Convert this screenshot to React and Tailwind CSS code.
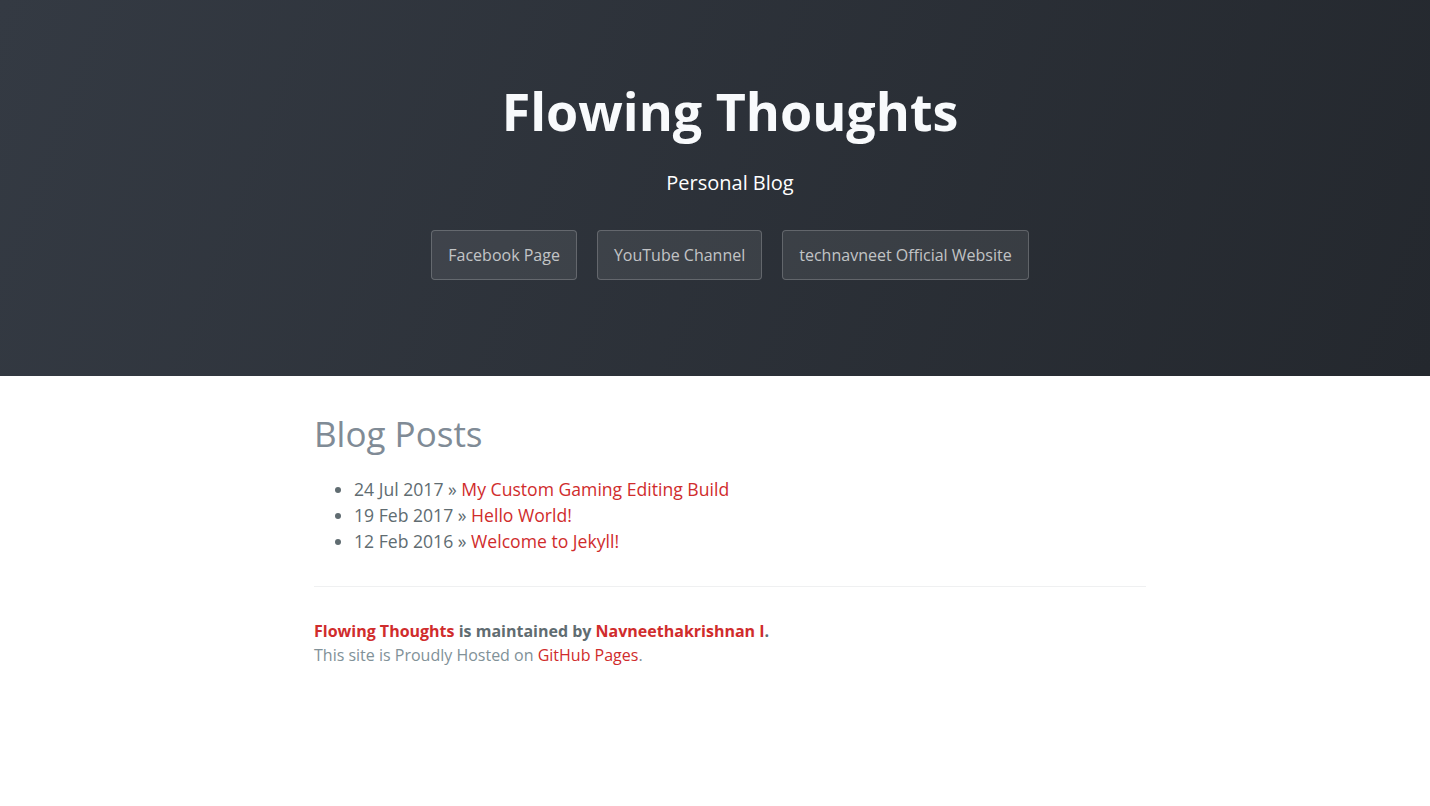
const posts = [
  { date: '24 Jul 2017', title: 'My Custom Gaming Editing Build' },
  { date: '19 Feb 2017', title: 'Hello World!' },
  { date: '12 Feb 2016', title: 'Welcome to Jekyll!' },
];

const buttons = ['Facebook Page', 'YouTube Channel', 'technavneet Official Website'];

export default function App() {
  return (
    <div className="min-h-[806px] bg-white font-['Open_Sans',sans-serif] text-[#606c71]">
      <header className="bg-[linear-gradient(110deg,#343a43,#24282e)] pb-[96px] pl-[30px] pt-[72px] text-center">
        <h1 className="text-[52px] font-bold leading-[78px] text-[#f8fafc]">Flowing Thoughts</h1>
        <p className="mt-[18px] text-[20px] leading-[30px] text-white">Personal Blog</p>
        <div className="mt-[32px] flex justify-center gap-[20px]">
          {buttons.map((b) => (
            <a
              key={b}
              href="#"
              className="h-[50px] rounded-[4px] border border-white/20 bg-white/[0.08] px-[16px] text-[16px] leading-[48px] text-white/70"
            >
              {b}
            </a>
          ))}
        </div>
      </header>

      <main className="mx-auto w-[832px] translate-x-[15px] pt-[32px] text-[17.6px] leading-[26px]">
        <h2 className="text-[35px] font-normal leading-[52px] text-[#808b96]">Blog Posts</h2>
        <ul className="mt-[16px] list-disc pl-[40px] marker:text-[#606c71]">
          {posts.map((p) => (
            <li key={p.title}>
              {p.date} » <a href="#" className="text-[#d02c2c]">{p.title}</a>
            </li>
          ))}
        </ul>

        <footer className="mt-[32px] border-t border-[#eff0f1] pt-[32px] text-[16px] leading-[24px]">
          <span className="block font-bold">
            <a href="#" className="text-[#d02c2c]">Flowing Thoughts</a> is maintained by{' '}
            <a href="#" className="text-[#d02c2c]">Navneethakrishnan I</a>.
          </span>
          <span className="block text-[#819198]">
            This site is Proudly Hosted on <a href="#" className="text-[#d02c2c]">GitHub Pages</a>.
          </span>
        </footer>
      </main>
    </div>
  );
}
